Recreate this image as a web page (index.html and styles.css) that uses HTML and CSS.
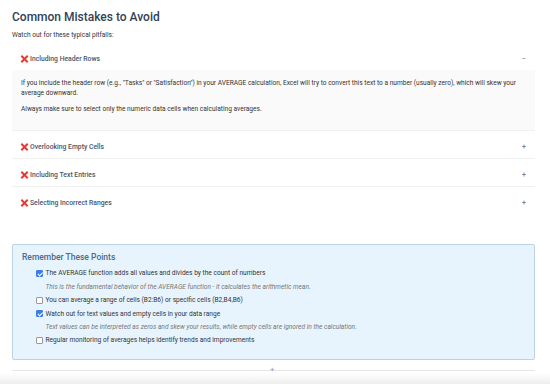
FILE: index.html
```html
<!doctype html>
<html>
  <head>
    <meta charset='utf-8'>
    <title>Common Mistakes</title>
    <link rel="stylesheet" href="styles.css">
  </head>
  <body>
    <div class="page">
      <h2>Common Mistakes to Avoid</h2>
      <p class="intro">Watch out for these typical pitfalls:</p>

      <div class="accordion">
        <div class="item open">
          <div class="head"><span class="x"></span>Including Header Rows<span class="toggle">−</span></div>
          <div class="body">
            <p>If you include the header row (e.g., "Tasks" or "Satisfaction") in your AVERAGE calculation, Excel will try to convert this text to a number (usually zero), which will skew your average downward.</p>
            <p>Always make sure to select only the numeric data cells when calculating averages.</p>
          </div>
        </div>
        <div class="item">
          <div class="head"><span class="x"></span>Overlooking Empty Cells<span class="toggle">+</span></div>
        </div>
        <div class="item">
          <div class="head"><span class="x"></span>Including Text Entries<span class="toggle">+</span></div>
        </div>
        <div class="item last">
          <div class="head"><span class="x"></span>Selecting Incorrect Ranges<span class="toggle">+</span></div>
        </div>
      </div>

      <div class="points">
        <h3>Remember These Points</h3>
        <ul>
          <li><span class="box checked"></span>The AVERAGE function adds all values and divides by the count of numbers</li>
          <li class="note">This is the fundamental behavior of the AVERAGE function - it calculates the arithmetic mean.</li>
          <li><span class="box"></span>You can average a range of cells (B2:B6) or specific cells (B2,B4,B6)</li>
          <li><span class="box checked"></span>Watch out for text values and empty cells in your data range</li>
          <li class="note">Text values can be interpreted as zeros and skew your results, while empty cells are ignored in the calculation.</li>
          <li><span class="box"></span>Regular monitoring of averages helps identify trends and improvements</li>
        </ul>
      </div>

      <div class="divider"><span>+</span></div>
    </div>
    <div class="shade"></div>
  </body>
</html>
```

FILE: styles.css
```css
body {
  margin: 0;
  font-family: Roboto, 'Liberation Sans', sans-serif;
  color: #333;
  background: #fff;
  overflow: hidden;
}

.page {
  padding: 9px 15px 0 12px;
}

h2 {
  margin: 0;
  font-size: 12px;
  font-weight: 500;
  color: #334155;
  line-height: 16px;
}

.intro {
  margin: 5px 0 0;
  font-size: 6.6px;
  line-height: 10px;
  color: #333;
}

.accordion {
  margin-top: 2px;
}

.item {
  border-bottom: 1px solid #f0f0f0;
}

.item.last {
  border-bottom: none;
}

.head {
  box-sizing: border-box;
  display: flex;
  align-items: center;
  height: 28px;
  padding: 5px 9px 0;
  font-size: 6.8px;
  font-weight: 500;
  color: #4a5568;
}

.item:not(.open):not(.last) .head {
  height: 27px;
}

.x {
  position: relative;
  width: 7px;
  height: 7px;
  margin-right: 2px;
}

.x:before,
.x:after {
  content: '';
  position: absolute;
  left: -1px;
  top: 2.5px;
  width: 9px;
  height: 2px;
  background: #e53935;
  transform: rotate(45deg);
}

.x:after {
  transform: rotate(-45deg);
}

.toggle {
  margin-left: auto;
  font-size: 7px;
  color: #718096;
}

.body {
  background: #fafafa;
  padding: 9.25px 9px 15px;
  font-size: 6.6px;
  line-height: 9.5px;
  color: #333;
}

.body p {
  margin: 0 0 7px;
}

.body p:last-child {
  margin: 0;
}

.points {
  margin-top: 29px;
  background: #e8f4fd;
  border: 1px solid #bcd3e3;
  border-radius: 2px;
  padding: 5px 9px 12px;
}

h3 {
  margin: 0;
  font-size: 8.5px;
  font-weight: 500;
  color: #4a6a8a;
  line-height: 14px;
}

ul {
  list-style: none;
  margin: 3px 0 0;
  padding: 0 0 0 14px;
}

li {
  display: flex;
  align-items: center;
  height: 13.4px;
  font-size: 6.6px;
  color: #333;
}

li.note {
  padding-left: 9.5px;
  font-style: italic;
  color: #777;
}

.box {
  box-sizing: border-box;
  width: 7px;
  height: 7px;
  margin-right: 2.5px;
  border: 1px solid #999;
  border-radius: 1px;
  background: #fff;
}

.box.checked {
  position: relative;
  border-color: #3b7de9;
  background: #3b7de9;
}

.box.checked:after {
  content: '';
  position: absolute;
  left: 1.5px;
  top: 0;
  width: 1.5px;
  height: 3.5px;
  border: solid #fff;
  border-width: 0 1px 1px 0;
  transform: rotate(45deg);
}

.divider {
  margin-top: 10px;
  height: 1px;
  background: #e6e6e6;
  position: relative;
}

.divider span {
  position: absolute;
  left: 258px;
  top: -5px;
  font-size: 8px;
  line-height: 10px;
  color: #999;
}

.shade {
  margin-top: 2px;
  height: 12px;
  background: linear-gradient(#fff, #ececec);
}
```
